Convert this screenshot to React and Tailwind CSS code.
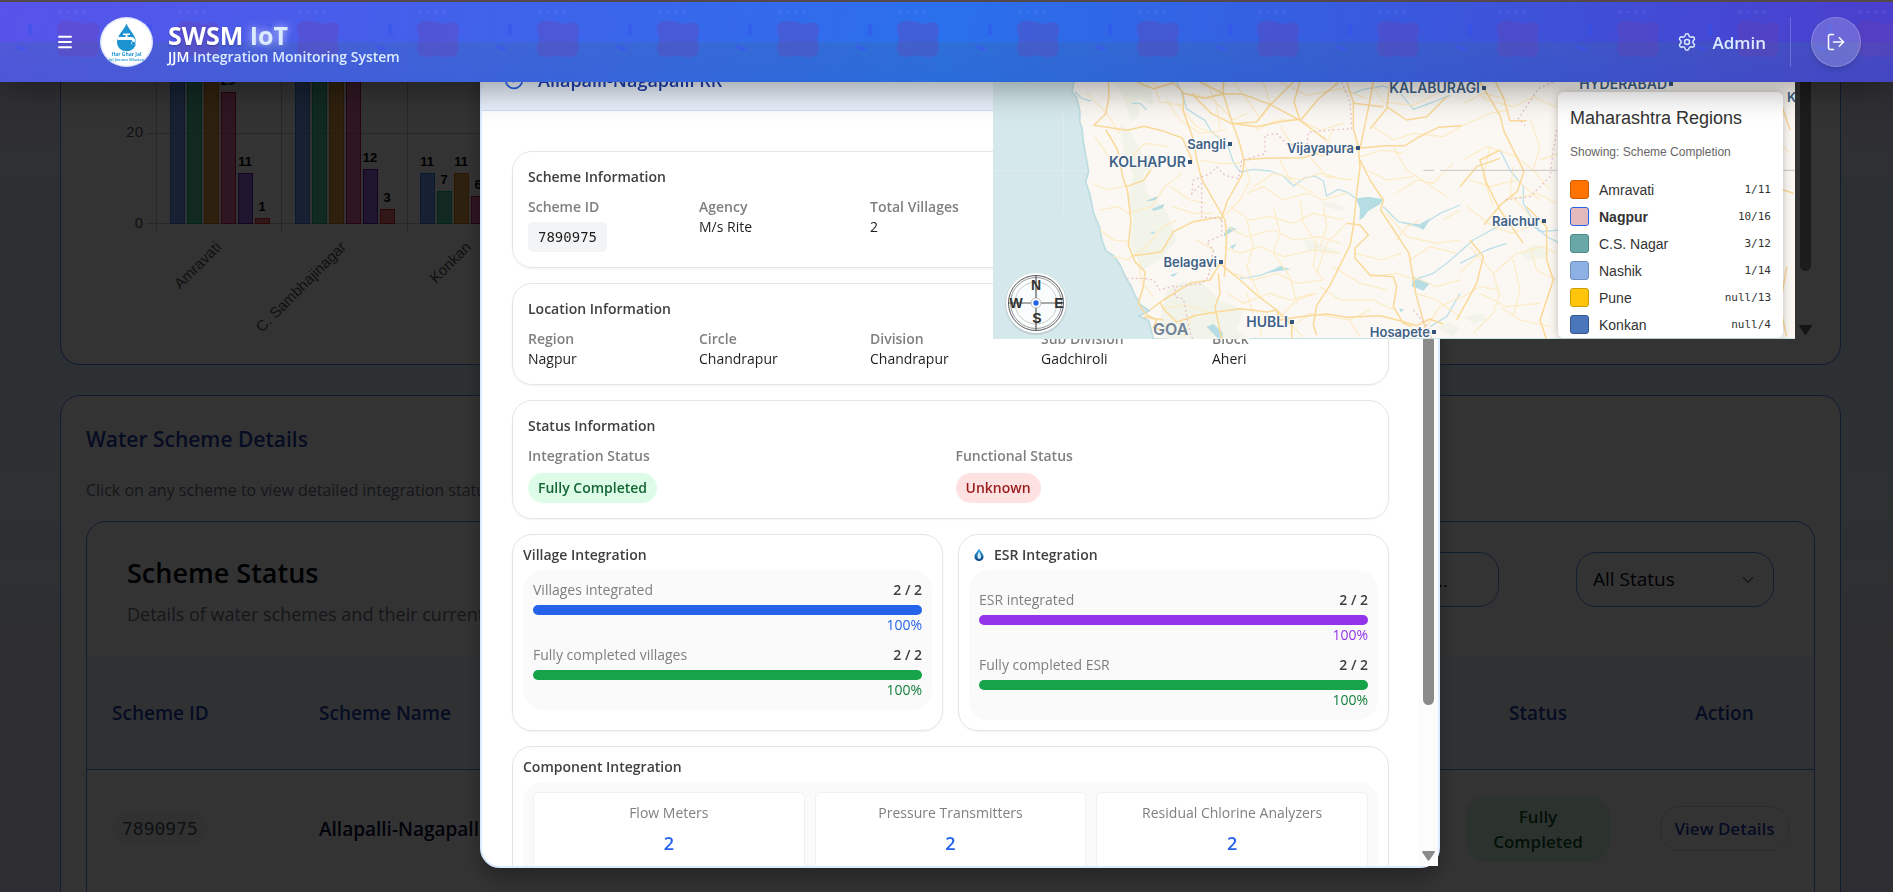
import React from "react";
import { Menu, Settings, LogOut, CircleCheck, ChevronDown } from "lucide-react";

/* ---------- Header ---------- */

function HeaderPattern() {
  return (
    <svg className="absolute inset-0 h-full w-full" aria-hidden="true">
      <defs>
        <pattern id="tile" width="120" height="80" patternUnits="userSpaceOnUse">
          <path
            d="M57 25C58 19 66 18 72 19C78 20 83 23 88 21C94 19 99 22 99 27C100 32 96 35 98 41C100 48 98 55 91 55C84 56 77 52 71 54C64 57 57 53 57 47C57 41 60 39 59 35C58 32 56 29 57 25Z"
            fill="#6a3fae"
            fillOpacity="0.32"
          />
          <g fill="none" stroke="#7fa0ff" strokeOpacity="0.18">
            <circle cx="60" cy="10" r="1.5" />
            <circle cx="68" cy="10" r="0.8" />
            <circle cx="76" cy="10" r="1.5" />
            <circle cx="84" cy="10" r="1.5" />
          </g>
          <path d="M27 22h6l-1 4v4l2 3h-8l2-3v-4z" fill="#2f4df0" fillOpacity="0.4" />
          <path d="M15 39l3 5 4 1h4v3h-7l-3-4z" fill="#3c4ff5" fillOpacity="0.55" />
          <circle cx="14" cy="24" r="3.5" fill="none" stroke="#4747d8" strokeOpacity="0.15" />
        </pattern>
      </defs>
      <rect width="100%" height="100%" fill="url(#tile)" />
    </svg>
  );
}

function Logo() {
  return (
    <svg width="53" height="50" viewBox="0 0 53 50" role="img" aria-label="Har Ghar Jal">
      <ellipse cx="26.5" cy="25" rx="26.5" ry="25" fill="#e3e7fd" />
      <ellipse cx="26.5" cy="25" rx="25" ry="23.5" fill="#fff" />
      <path d="M26.500 6.500C24 13 17 18 17 25.500a9.500 8.800 0 0 0 19 0C36 18 29 13 26.500 6.500Z" fill="#1d93d2" />
      <path d="M23 16.500h7v1.500h-2.500v2H31c3 0 4.500 2 4.500 5h-3c0-1.500-.5-2-2-2H17.500v-3h8v-2H23z" fill="#fff" />
      <path d="M32 27.500a2 2 0 1 1 3 0" stroke="#bfe2f5" strokeWidth="1" fill="none" />
      <text x="26.500" y="39" textAnchor="middle" fontFamily="Open Sans" fontSize="5" fontWeight="700" fill="#1d93d2">
        Har Ghar Jal
      </text>
      <text x="26.500" y="44" textAnchor="middle" fontFamily="Open Sans" fontSize="4" fontWeight="700" fill="#4aaadb">
        Jal Jeevan Mission
      </text>
    </svg>
  );
}

function Header() {
  return (
    <header className="fixed inset-x-0 top-0 z-50 flex h-[82px] items-center justify-between border-t-2 border-[#54484a] bg-[linear-gradient(100deg,#5853ea_0%,#2a70ec_50%,#4b3ecd_100%)] pr-8 pl-14 shadow-[0_8px_32px_rgba(0,0,0,0.35)]">
      <div className="absolute inset-x-0 bottom-0 h-1/2 bg-[linear-gradient(#3a6a9a40,#2a609a38)]" />
      <HeaderPattern />
      <div className="relative flex items-center">
        <button type="button" aria-label="Open menu" className="text-white">
          <Menu size={18} strokeWidth={2.400} />
        </button>
        <span className="ml-[26px]">
          <Logo />
        </span>
        <div className="ml-[15px] pt-1.5 text-white">
          <h1 className="text-[25px] leading-6 font-bold [text-shadow:0_1px_2px_rgba(0,0,0,0.25)]">
            SWSM <span className="text-blue-100 [text-shadow:0_0_8px_rgba(255,255,255,0.7)]">IoT</span>
          </h1>
          <p className="text-sm leading-5 font-semibold text-blue-100">
            <span className="text-white">JJM</span> Integration Monitoring System
          </p>
        </div>
      </div>
      <div className="relative flex items-center text-blue-100">
        <Settings size={20} strokeWidth={1.800} />
        <span className="mt-0.5 ml-[15px] text-[17px] font-semibold">Admin</span>
        <span className="ml-6 h-[50px] w-px bg-white/20" />
        <button
          type="button"
          aria-label="Log out"
          className="ml-5 flex size-[50px] items-center justify-center rounded-full border border-white/20 bg-white/20 text-white shadow-md"
        >
          <LogOut size={20} strokeWidth={1.800} />
        </button>
      </div>
    </header>
  );
}

/* ---------- Chart ---------- */

const SERIES = [
  ["rgba(59,130,246,0.7)", "#3b82f6"],
  ["rgba(16,185,129,0.7)", "#10b981"],
  ["rgba(217,130,11,0.75)", "#d97706"],
  ["rgba(219,39,119,0.65)", "#be185d"],
  ["rgba(109,40,217,0.7)", "#5b21b6"],
  ["rgba(239,68,68,0.75)", "#dc2626"],
];

const GROUPS = [
  { name: "Amravati", values: [60, 60, 60, 29, 11, 1] },
  { name: "C. Sambhajinagar", values: [60, 60, 60, 60, 12, 3] },
  { name: "Konkan", values: [11, 7, 11, 6, 4, 1] },
];

function RegionChart() {
  const base = 223;
  return (
    <svg className="h-[339px] w-full" role="img" aria-label="Region comparison chart">
      <g stroke="#c4c4c4">
        <path d="M61 133.500H900M61 223.500H900M70.500 0V233M195.500 0V233M321.500 0V233" fill="none" />
      </g>
      <g fontFamily="Liberation Sans, sans-serif" fontSize="15" fill="#555" textAnchor="end">
        <text x="57" y="137">20</text>
        <text x="57" y="228">0</text>
      </g>
      {GROUPS.map((group, g) => (
        <g key={group.name} fontFamily="Liberation Sans, sans-serif">
          {group.values.map((value, i) => {
            const x = 84 + g * 125 + i * 17;
            const h = Math.round(value * 4.500);
            return (
              <g key={i}>
                <rect x={x + 0.500} y={base - h + 0.500} width="14" height={h} fill={SERIES[i][0]} stroke={SERIES[i][1]} />
                {value < 50 && (
                  <text x={x + 7} y={base - h - 7} textAnchor="middle" fontSize="13" fontWeight="700" fill="#000">
                    {value}
                  </text>
                )}
              </g>
            );
          })}
          <text
            transform={`translate(${136 + g * 125} 248) rotate(-45)`}
            textAnchor="end"
            fontSize="15"
            fill="#555"
          >
            {group.name}
          </text>
        </g>
      ))}
    </svg>
  );
}

/* ---------- Map ---------- */

const LEGEND = [
  { name: "Amravati", count: "1/11", swatch: "border-[#cc5c00] bg-[#ff7300]" },
  { name: "Nagpur", count: "10/16", swatch: "border-[#2563eb] bg-[#e3b9bb]", active: true },
  { name: "C.S. Nagar", count: "3/12", swatch: "border-[#4f8a88] bg-[#68a9a8]" },
  { name: "Nashik", count: "1/14", swatch: "border-[#6f8fc0] bg-[#8cb1e2]" },
  { name: "Pune", count: "null/13", swatch: "border-[#cc9c05] bg-[#ffc50a]" },
  { name: "Konkan", count: "null/4", swatch: "border-[#35598f] bg-[#4a77bb]" },
];

function Compass() {
  return (
    <g transform="translate(1036 303)">
      <circle r="31" fill="#000" fillOpacity="0.1" cy="1" />
      <circle r="30" fill="#fff" />
      <circle r="27.500" fill="#fafdfd" stroke="#555" />
      <circle r="25.500" fill="none" stroke="#999" />
      <circle r="21" fill="none" stroke="#ccc" />
      <path d="M0-27V27M-27 0H27" stroke="#555" strokeWidth="1.200" />
      <circle r="5" fill="#fff" stroke="#aaa" strokeWidth="0.800" />
      <circle r="2.700" fill="#2563eb" />
      <g fontFamily="Liberation Sans, sans-serif" fontSize="14" fontWeight="700" fill="#333" textAnchor="middle">
        <text y="-13">N</text>
        <text y="20" x="1">S</text>
        <text x="-20" y="5">W</text>
        <text x="23" y="5">E</text>
      </g>
    </g>
  );
}

function City({ x, y, size = 13, children }) {
  return (
    <g>
      <text
        x={x}
        y={y}
        textAnchor="end"
        fontSize={size}
        fontWeight="600"
        fill="#3f6186"
        stroke="#fff"
        strokeOpacity="0.8"
        strokeWidth="2"
        paintOrder="stroke"
      >
        {children}
      </text>
      <rect x={x + 2} y={y - 7} width="4" height="4" fill="#33557b" />
    </g>
  );
}

function RegionMap() {
  return (
    <div className="relative z-40 w-[802px] shrink-0 overflow-hidden bg-[#d5e8eb]">
      <svg width="802" height="339" viewBox="993 0 802 339" role="img" aria-label="Map of Maharashtra regions">
        <g transform="translate(980 60) scale(0.333333)">
          <path
            d="M276-190L282 66 276 95 290 112 300 155 299 185 306 205 310 245 318 290 326 335 317 365 330 405 341 460 358 500 366 540 378 573 402 588 422 618 437 652 452 676 464 705 480 733 508 752 476 768 506 782 520 837H2460V-190Z"
            fill="#fbf8f3"
            stroke="#bcdde2"
            strokeWidth="5"
          />
          <path d="M40 331H325M250 160V460" stroke="#fff" strokeOpacity="0.35" strokeWidth="2" />
          <g fill="#f2f4e9">
            <path d="M405 66l30 60 20 60 25-20-10-50 50 20-10-70zM420 190l30 20 40 80 30-10 10 40-40 20 10 60 60 50 30 90-40 50-60 40-40-70 10-90-20-50 20-70-30-80zM560 690l40-20 60-10 60 60 70 30-20 60 40 27H560l-20-60zM970 535l40 15 60 20-10 10-80-10zM1020 420l60 15 20 10-20 8-50-15zM1370 800l40-15 30 20-20 25z" />
            <path d="M1620 580l40-25 50 10-10 30-60 5zM1450 770l60-10 10 20-40 10z" />
          </g>
          <g fill="#b6dde4">
            <path d="M1130 415l35-5 45 8-10 15-35 20-15 20-12 8 2-35-8-20zM500 422l35-15-5 12-26 5zM515 447l38-16-5 14-28 8zM508 520l18-6-5 8zM732 520l20-20 18 8-20 10-18 12zM750 560l20-10-12 18zM680 800l20-8 28 25v18h-15zM570 645l25-8-15 14zM860 640l40-22 32 10-40 6zM1258 485l60 8 35-20-15 25-8 12-20-12zM1258 745l14 4-10 8zM1300 650l50 20 -20 22-35-14z" />
          </g>
          <g fill="none" stroke="#bfe0e8" strokeWidth="4" strokeLinejoin="round">
            <path d="M590 66l15 30 15 50 30 20 25 15 20 35 30 25 20 20 15 45 20 30 40-8 50 5 40 15 30 30 35-25 30-5 25 15 10 45 35-20 30 10 25 20M1210 440l45 45 60 15 35-20 30-20 60-25M1120 100l30-12 60-10 50 20 40 50 60-22 50-20M780 655l60-8 60-25M285 95l20 20 28 8M455 130l25 0 20 20M1440 700l-40 70-50 30M1560 270l30 60 40 50 0 50 40 70 30 30 40 20" />
            <path d="M1300 660l60-20 40-30 80-70 110-60 60 10 30 25 60-5M1440 610l80-40 60-20" />
          </g>
          <g fill="none" stroke="#fdebc4" strokeWidth="3.500" strokeLinejoin="round">
            <path d="M320 100l60 60 40 60M345 230l40 60 60 10 50-50 70 10M335 370l50 20 60-15M355 450l60-10 30 20 70-20 40-60 50-40M360 510l40 30 50 5M440 600l60-40 50-60 40-20M560 120l40 60 60 40 80-10M520 66l20 60 70 10M640 100l60 20 60 60 40-20M680 66l30 70 10 70M850 66l20 60-20 40M900 66l80 40 100-20 80 30M960 180l60 30 70-20M830 210l60-30 70 0M760 66l40 50 40 60M1170 66l40 60 90 10 100-50M1180 200l60 40 60-20 90 10 50-30" />
            <path d="M790 300l20 60-30 60-50 50M800 400l50-20 60 40 70-20 50 20 70-20M750 440l60 40 60-10 70 20 60-30 90 20M740 500l60 30 80-20 60 30 80-10 60 20M730 560l50 20 60-20 70 30 90-20 80 10M800 480l20 80-20 60 40 90M880 440l20 80-20 60 50 70 20 80M960 420l10 70 40 60-10 70 30 40M1030 440l10 60-20 60M820 380l60-40 80 20 60-20 80 20M900 300l30 60 70 40M990 290l50 60 80 10M1140 290l70-20 60 10M760 640l60 20 70-20 60 30 80-10M740 700l50 30 80-30 60 20 70-20M800 700l20 60M650 540l50 30M600 600l70 20 50-10M580 440l60 20 60 0M570 380l60 40 50 10M660 300l60 10 60 0" />
            <path d="M1100 490l-60 60-30 90M1125 580l80 20 60-20M1170 650l80-10 60 20M1060 620l80 50 80 20M1020 680l60 40 100 0 60 30M1220 460l60 70 90 20 70-10M1290 600l60-40 80 20M1250 400l60-40 50 10 60-60M1240 260l40 70 60 40 60 40M1160 330l60 30 80-10M1300 650l70 30 70-20M1310 700l60 20 70 50M900 770l50-50 60-20M950 790l40-30 120 20 60-30M850 760l-10 70M910 770l60 60M1100 770l40 60M480 600l0 60 40 50M400 590l50 10M545 745l70-10 100 30M640 760l-30 70" />
            <path d="M540 290l-40 60M590 130l60 70 70 30M700 110l40-40M1390 480l50-30M1250 540l30-40 40-20M1340 800l40-60 60-30M1060 200l-30 90M900 200l40 60 90 30" />
            <path d="M1460 70l60 50 80 20 60-30 90 40M1440 200l90-40 60-10M1450 300l70-40 90 30 60 50M1470 360l60 20 80-20 70 60M1460 440l80 60 60 20 70-30M1540 640l70-60 80-20 40 20M1470 560l70 80 20 70M1500 700l80 40 100-10M1600 320l-10 80 60 70M1530 260l-20 90 30 90M1650 560l20 70 60 30M1560 740l60 40 90 20M1480 820l60-60 20-60" />
            <path d="M1450 130l60-30 80 20M1650 180l30 80-20 70 50 60M1580 420l90-20 60 30M1440 640l60-60M1430 720l70-40 60 10M1600 600l20 90-20 80M1680 300l60-20M2350 100l60 60-20 80 40 40M2360 460l40 50-40 100M2390 650l-30 80 30 90M1730 130l60-30 70 40" />
          </g>
          <g fill="none" stroke="#fad999" strokeWidth="4.500" strokeLinejoin="round">
            <path d="M385 66l2 45-10 50-35 35 35 5 65 10 50-12 60 15 55 20 25 55 5 20" />
            <path d="M378 210l35 60 15 80 15 45 10 90-8 70 20 50 30 30-5 45-15 50 20 30 35 22-10 20 30 10M440 380l50-18 20-30M470 66l50 20 60-18 30 30 0 55 30 85 10 60 15 60 70 122 5 50-5 90-2 30M610 100l60 15 60-12 0-37M660 66l70 35 60 2 80 30 90 48 80 60M730 103l25 80 25 70 12 50-5 40-45 80-20 60M940 66l-70 70-40 50-75 5-60-30-60-60M755 190l75 10 70-15 65-8 50-60 60-50M960 66l-18 60 18 55M790 300l60-5 120-2 60-20 100-10M1100 66l20 60 0 80 15 55 5 60-10 80-10 100-10 55-60 120-40 60-10 60 10 30M1180 66l-15 80-25 120M1140 300l30 60 40 60-8 30 85 130 20 120 25 90 10 45M1135 265l80-8 60 0 40-25 60-30 70-5M1230 66l-10 80-50 60M720 470l-80 15-60 30-35 60-50 8-40 5" />
            <path d="M720 610l60 50 50 45 60 45-30 6-80-10-70 10-60 10-60 20-40-40-10-20M890 750l10 30 60-10 80-8 60 10 100-5 60 15 50 15 40-20 40 15M720 610l-30 50-60 10-80 50-40 30M715 640l5 60-15 40 20 97M1100 490l40 5 25 30-40 40 0 30 45 50 70 5 10 30-10 60 30 50 25 10M490 770l60 10M890 750l45 45 0 40M1120 130l90 10M1220 140l60 40 60-10 60-60" />
            <path d="M1440 66l100-14 30 60 20 70 50 0M1440 380l50-60 70-25M1500 66l60 100 12 48 60 120-20 60-50 40-50 60M1560 270l-60 30 20 70 40 80 70 100M1640 440l60 60 0 100 20 60M1430 780l60-110 20-80-40-50M1720 660l-40 120 20 60M2380 380l60 20M2400 120l30 90M2420 620l-20 120 20 90" />
          </g>
          <g fill="none" stroke="#e6c3c7" strokeWidth="4" strokeDasharray="6 8">
            <path d="M1085 66l25 60 5 80-70 5-60 5-5 45-60-10-30-30-35 5 0 55-70 20-10 55-40-10-25-25-20 20-50 20-5 40 30-30 0 60 0 40 60 5 0 50-45 20 20 25-15 80-20 20-80 10 0 30 25 5 20 100 15 40M440 655l50 0 30 5 20 30 50-15M1720 66l-45 20-60 90 20 20M1730 210l-10 60-10 80-60 60-80 10M1300 750l50 60 10 60-25 40 10 80" />
          </g>
          <path d="M1330 331h32M1380 331h350M2410 331h60" stroke="#c9c6c3" strokeWidth="3" />
        </g>
        <g fontFamily="Inter, Open Sans, sans-serif">
          <City x={1226} y={149}>Sangli</City>
          <City x={1186} y={167} size={14}>KOLHAPUR</City>
          <City x={1354} y={153}>Vijayapura</City>
          <City x={1480} y={93} size={14}>KALABURAGI</City>
          <City x={1667} y={89} size={14}>HYDERABAD</City>
          <City x={1217} y={267}>Belagavi</City>
          <City x={1288} y={327} size={14}>HUBLI</City>
          <City x={1430} y={337}>Hosapete</City>
          <City x={1540} y={226}>Raichur</City>
          <text x="1787" y="102" fontSize="13" fontWeight="600" fill="#3f6186">
            K
          </text>
          <text x="1153" y="335" fontSize="16" fontWeight="600" fill="#6f8299">
            GOA
          </text>
        </g>
        <Compass />
      </svg>
      <aside className="absolute top-[92px] right-3 w-[225px] rounded-md bg-white/95 px-3 pt-3 font-['Liberation_Sans',sans-serif] text-[#333] shadow-[0_0_10px_rgba(0,0,0,0.25)]">
        <h2 className="text-lg leading-7">Maharashtra Regions</h2>
        <p className="mt-2.5 text-xs leading-5 text-[#666]">Showing: Scheme Completion</p>
        <ul className="mt-3.5 flex flex-col">
          {LEGEND.map((item) => (
            <li key={item.name} className="flex h-[27px] items-center text-sm">
              <span className={"mr-2.5 size-[19px] shrink-0 rounded-[3px] border " + item.swatch} />
              <span className={item.active ? "font-bold" : ""}>{item.name}</span>
              <span className="ml-auto font-['DejaVu_Sans_Mono',monospace] text-[11px]">{item.count}</span>
            </li>
          ))}
        </ul>
      </aside>
    </div>
  );
}

/* ---------- Page behind the dialog ---------- */

function Overview() {
  return (
    <section className="flex shrink-0 rounded-b-[20px] border border-t-0 border-[#5b8ef5] bg-white px-[25px] pb-[25px]">
      <div className="min-w-0 flex-1 overflow-hidden">
        <RegionChart />
      </div>
      <RegionMap />
      <div className="flex w-5 shrink-0 flex-col items-center justify-between pb-1" aria-hidden="true">
        <span className="h-[271px] w-[11px] rounded-b-full bg-[#8b8b8b]" />
        <svg width="13" height="10" viewBox="0 0 13 10">
          <path d="M1 0h11q1.500 0 .8 1.200L7.500 9q-1 1.300-2 0L.2 1.200Q-.5 0 1 0Z" fill="#666" />
        </svg>
      </div>
    </section>
  );
}

function SchemeTable() {
  const head = "px-[25px] font-semibold text-[#1e40af]";
  return (
    <section className="mt-[30px] shrink-0 rounded-[20px] border border-[#5b8ef5] bg-white px-[25px] pt-[25px] pb-10">
      <h2 className="text-[21px] leading-9 font-semibold text-[#1e40af]">Water Scheme Details</h2>
      <p className="mt-[19px] text-base leading-7 text-gray-500">
        Click on any scheme to view detailed integration status
      </p>
      <div className="mt-[17px] rounded-[20px] border border-[#5b8ef5] pb-10">
        <div className="flex h-[135px] items-start justify-between px-10 pt-[30px]">
          <div>
            <h3 className="text-[27px] leading-[42px] font-semibold text-gray-950">Scheme Status</h3>
            <p className="mt-2 text-lg leading-6 text-gray-500">Details of water schemes and their current status</p>
          </div>
          <div className="flex gap-[77px] text-gray-950">
            <input
              type="text"
              aria-label="Search schemes"
              placeholder="Search by scheme name or ID..."
              className="h-[55px] w-[332px] rounded-[20px] border border-[#5b8ef5] px-4 text-lg placeholder:text-gray-950"
            />
            <div className="relative">
              <select
                aria-label="Filter by status"
                className="h-[55px] w-[198px] appearance-none rounded-[20px] border border-[#5b8ef5] px-4 text-[19px]"
              >
                <option>All Status</option>
              </select>
              <ChevronDown className="absolute top-[19px] right-[17px] text-gray-500" size={18} />
            </div>
          </div>
        </div>
        <table className="w-full table-fixed text-left text-[19px]">
          <colgroup>
            <col className="w-[207px]" />
            <col />
            <col className="w-[194px]" />
            <col className="w-[179px]" />
          </colgroup>
          <thead>
            <tr className="h-[112px] border-t border-b border-t-blue-100 border-b-[#5b8ef5] bg-[#eff6fd]">
              <th className={head}>Scheme ID</th>
              <th className={head}>Scheme Name</th>
              <th className={head + " text-center"}>Status</th>
              <th className={head + " text-center"}>Action</th>
            </tr>
          </thead>
          <tbody>
            <tr className="h-[118px]">
              <td className="px-[25px]">
                <span className="rounded-full bg-gray-100 px-2.5 py-1.5 font-['DejaVu_Sans_Mono',monospace] text-lg text-gray-600">
                  7890975
                </span>
              </td>
              <td className="px-[25px] font-semibold text-[#0b0b3a]">Allapalli-Nagapalli RR</td>
              <td className="px-[25px]">
                <span className="block rounded-[20px] bg-green-100 py-2 text-center text-[17px] leading-[25px] font-semibold text-green-900">
                  Fully
                  <br />
                  Completed
                </span>
              </td>
              <td className="px-[25px] text-center">
                <button
                  type="button"
                  className="h-[45px] w-full rounded-[20px] border border-blue-200 text-[17px] font-semibold whitespace-nowrap text-[#1e40af]"
                >
                  View Details
                </button>
              </td>
            </tr>
          </tbody>
        </table>
      </div>
    </section>
  );
}

/* ---------- Dialog ---------- */

function InfoCard({ title, columns, children }) {
  return (
    <section className="rounded-[20px] border border-[#e5e5e5] p-[15px] shadow-xs">
      <h3 className="font-semibold text-[#404040]">{title}</h3>
      <dl className={"mt-2.5 grid gap-2.5 " + columns}>{children}</dl>
    </section>
  );
}

function Field({ label, children }) {
  return (
    <div>
      <dt className="font-semibold text-[#808080]">{label}</dt>
      <dd className="text-[#1f1f1f]">{children}</dd>
    </div>
  );
}

function Progress({ label, value, bar, tone }) {
  return (
    <div>
      <div className="flex justify-between">
        <span className="text-[#808080]">{label}</span>
        <span className="font-semibold text-[#404040]">{value}</span>
      </div>
      <div className={"mt-[5px] h-2.5 rounded-full " + bar} />
      <p className={"text-right " + tone}>100%</p>
    </div>
  );
}

function IntegrationCard({ title, icon, pad, children }) {
  return (
    <section className="rounded-[20px] border border-[#e5e5e5] p-2.5 shadow-xs">
      <h3 className="flex items-center gap-[5px] font-semibold text-[#404040]">
        {icon}
        {title}
      </h3>
      <div className={"mt-[5px] flex flex-col gap-2.5 rounded-[20px] bg-[#fafafa] px-2.5 pb-2.5 " + pad}>{children}</div>
    </section>
  );
}

function DropIcon() {
  return (
    <svg width="20" height="14" viewBox="0 0 20 14" aria-hidden="true">
      <defs>
        <linearGradient id="drop" x1="0" y1="0" x2="0" y2="1">
          <stop offset="0" stopColor="#35b5f0" />
          <stop offset="1" stopColor="#0b3f7c" />
        </linearGradient>
      </defs>
      <path d="M10 0.500C9 3 5.400 5.500 5.400 9a4.600 4 0 0 0 9.200 0C14.600 5.500 11 3 10 0.500Z" fill="url(#drop)" />
      <path d="M10.200 3.500c-1 2-1.700 3-1.700 5.500s3.500 2.500 3.500 0-1.200-3.500-1.800-5.500z" fill="#d5ecfa" />
    </svg>
  );
}

function SchemeDialog() {
  return (
    <div className="fixed inset-0 z-30 flex justify-center bg-black/80 pt-12 pb-6 pl-[27px]">
      <div
        role="dialog"
        aria-labelledby="dialog-title"
        className="flex w-[960px] flex-col rounded-[20px] border-2 border-blue-100 bg-white shadow-[0_10px_20px_rgba(0,0,0,0.3)]"
      >
        <header className="flex items-center gap-3.5 rounded-t-[18px] border-b border-[#cfe2f7] bg-[#eaf1fc] px-[22px] py-[15px]">
          <CircleCheck size={20} className="text-[#2563eb]" />
          <h2 id="dialog-title" className="text-lg leading-[30px] font-semibold text-[#1e40af]">
            Allapalli-Nagapalli RR
          </h2>
        </header>
        <div className="flex min-h-0 flex-1">
          <div className="flex min-w-0 flex-1 flex-col gap-[15px] overflow-hidden rounded-bl-[18px] px-[30px] pt-10 text-sm leading-5 [&>*]:shrink-0">
            <InfoCard title="Scheme Information" columns="grid-cols-5">
              <Field label="Scheme ID">
                <span className="mt-[5px] inline-block rounded-[5px] bg-gray-100 px-2.5 py-[5px] align-top font-['DejaVu_Sans_Mono',monospace]">
                  7890975
                </span>
              </Field>
              <Field label="Agency">M/s Rite</Field>
              <Field label="Total Villages">2</Field>
            </InfoCard>
            <InfoCard title="Location Information" columns="grid-cols-5">
              <Field label="Region">Nagpur</Field>
              <Field label="Circle">Chandrapur</Field>
              <Field label="Division">Chandrapur</Field>
              <Field label="Sub Division">Gadchiroli</Field>
              <Field label="Block">Aheri</Field>
            </InfoCard>
            <InfoCard title="Status Information" columns="grid-cols-2">
              <Field label="Integration Status">
                <span className="mt-[7px] inline-block rounded-full bg-[#dcfce7] px-2.5 py-[5px] align-top font-semibold text-[#166534]">
                  Fully Completed
                </span>
              </Field>
              <Field label="Functional Status">
                <span className="mt-[7px] inline-block rounded-full bg-[#fee2e2] px-2.5 py-[5px] align-top font-semibold text-[#991b1b]">
                  Unknown
                </span>
              </Field>
            </InfoCard>
            <div className="grid grid-cols-2 gap-[15px]">
              <IntegrationCard title="Village Integration" pad="pt-2.5">
                <Progress label="Villages integrated" value="2 / 2" bar="bg-[#2563eb]" tone="text-[#2563eb]" />
                <Progress label="Fully completed villages" value="2 / 2" bar="bg-[#16a34a]" tone="text-[#15803d]" />
              </IntegrationCard>
              <IntegrationCard title="ESR Integration" icon={<DropIcon />} pad="pt-5">
                <Progress label="ESR integrated" value="2 / 2" bar="bg-[#9333ea]" tone="text-[#9333ea]" />
                <Progress label="Fully completed ESR" value="2 / 2" bar="bg-[#16a34a]" tone="text-[#15803d]" />
              </IntegrationCard>
            </div>
            <section className="rounded-[20px] border border-[#e5e5e5] p-2.5">
              <h3 className="font-semibold text-[#404040]">Component Integration</h3>
              <div className="mt-[5px] grid grid-cols-3 gap-2.5 rounded-[20px] bg-[#fafafa] p-2.5 text-center">
                {["Flow Meters", "Pressure Transmitters", "Residual Chlorine Analyzers"].map((name) => (
                  <div key={name} className="rounded-[5px] border border-[#f1f1f1] bg-white p-2.5 pb-10">
                    <p className="text-[#808080]">{name}</p>
                    <p className="mt-1.5 text-lg leading-7 font-semibold text-[#2563eb]">2</p>
                  </div>
                ))}
              </div>
            </section>
          </div>
          <div className="flex w-[19px] shrink-0 flex-col items-center justify-between bg-[#fcfcfc] pb-[5px]" aria-hidden="true">
            <span className="h-[594px] w-[11px] rounded-b-full bg-[#8b8b8b]" />
            <svg width="13" height="10" viewBox="0 0 13 10">
              <path d="M1 0h11q1.500 0 .8 1.200L7.500 9q-1 1.300-2 0L.2 1.200Q-.5 0 1 0Z" fill="#8b8b8b" />
            </svg>
          </div>
        </div>
      </div>
    </div>
  );
}

export default function App() {
  return (
    <div className="h-screen overflow-hidden bg-[linear-gradient(#efeaff_0%,#efeaff_10%,#dcf0fb_25%,#dff2fb_58%,#ebe6fa_75%,#ebe6fa_100%)] font-['Open_Sans',sans-serif]">
      <Header />
      <main className="flex h-full flex-col pr-[52px] pl-[60px]">
        <Overview />
        <SchemeTable />
      </main>
      <SchemeDialog />
    </div>
  );
}
